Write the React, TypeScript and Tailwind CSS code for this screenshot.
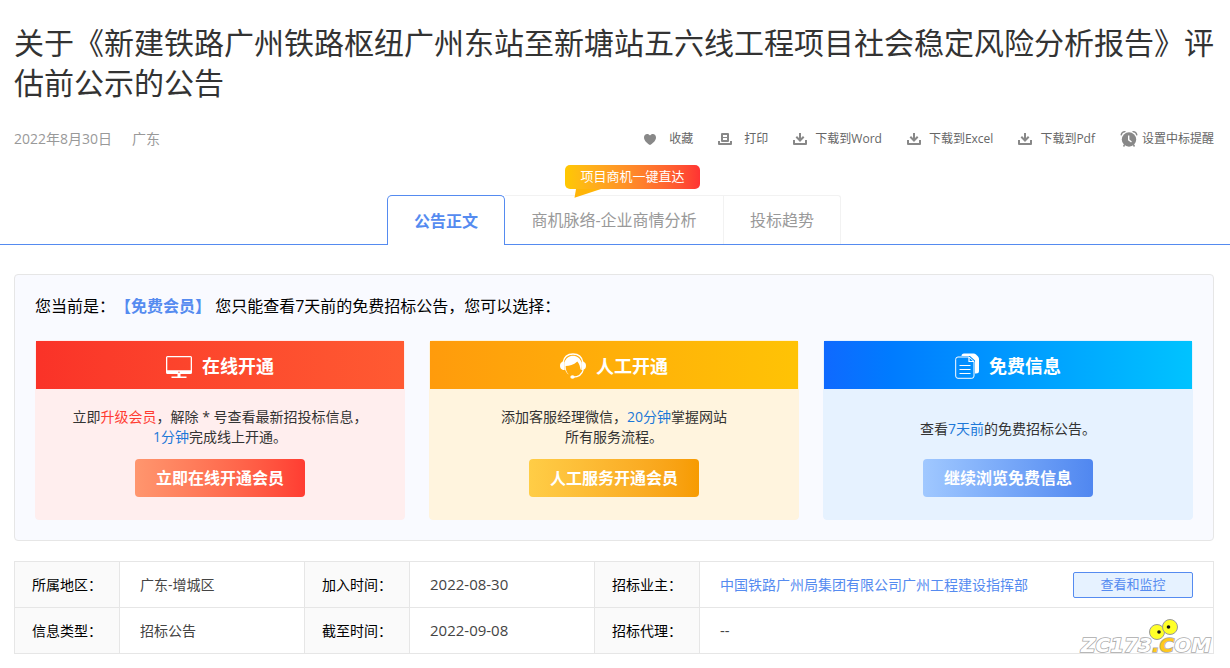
import type { ReactNode } from "react";
import clsx from "clsx";

interface ToolItem {
  label: string;
  icon: ReactNode;
  gap: string;
}

interface PlanCardProps {
  title: string;
  icon: ReactNode;
  action: string;
  cardClass: string;
  headClass: string;
  buttonClass: string;
  textClass?: string;
  children: ReactNode;
}

const tools: ToolItem[] = [
  { label: "收藏", icon: <HeartIcon />, gap: "gap-3" },
  { label: "打印", icon: <PrintIcon />, gap: "gap-3" },
  { label: "下载到Word", icon: <DownloadIcon />, gap: "gap-2" },
  { label: "下载到Excel", icon: <DownloadIcon />, gap: "gap-2" },
  { label: "下载到Pdf", icon: <DownloadIcon />, gap: "gap-2" },
  { label: "设置中标提醒", icon: <AlarmIcon />, gap: "gap-1" },
];

export default function App() {
  return (
    <main className="bg-white pt-[23px] pb-3 font-['Open_Sans','Noto_Sans_CJK_SC',sans-serif] text-sm text-[#333] [text-spacing-trim:space-all]">
      <header className="pr-4 pl-3.5">
        <h1 className="text-[30px] leading-10">
          关于《新建铁路广州铁路枢纽广州东站至新塘站五六线工程项目社会稳定风险分析报告》评估前公示的公告
        </h1>
        <div className="mt-6 flex flex-wrap items-center justify-between">
          <p className="flex gap-5 leading-6 text-[#999]">
            <span>2022年8月30日</span>
            <span>广东</span>
          </p>
          <div className="flex gap-[25px]">
            {tools.map((tool) => (
              <button key={tool.label} type="button" className={clsx("flex items-center text-xs leading-6 text-[#666]", tool.gap)}>
                {tool.icon}
                {tool.label}
              </button>
            ))}
          </div>
        </div>
      </header>

      <nav className="mt-11 flex justify-center border-b border-[#558bf0] pr-0.5 text-base text-[#999]">
        <a href="#content" className="-mb-px flex h-[50px] w-[118px] items-center justify-center rounded-t-[5px] border border-b-0 border-[#558bf0] bg-white font-bold text-[#558bf0]">
          公告正文
        </a>
        <a href="#analysis" className="relative flex w-[219px] items-center justify-center border-t border-r border-[#f2f2f2]">
          商机脉络-企业商情分析
          <span className="absolute -top-[31px] left-[60px] flex h-6 w-[135px] items-center justify-center rounded-[5px] bg-linear-to-r from-[#ffc800] to-[#ff3333] text-[13px] text-white">
            项目商机一键直达
            <svg className="absolute top-6 left-[9px]" width="27" height="9" viewBox="0 0 27 9" aria-hidden="true">
              <path d="M2 0H27L0.500 8.800Z" fill="#ffb508" />
            </svg>
          </span>
        </a>
        <a href="#trend" className="flex w-[117px] items-center justify-center rounded-tr-[3px] border-t border-r border-[#f2f2f2]">
          投标趋势
        </a>
      </nav>

      <div className="pr-4 pl-3.5">
        <section className="mt-[29px] rounded border border-[#e6e6e6] bg-[#f9faff] p-5">
          <p className="text-base leading-[22px] text-black">
            您当前是：<strong className="text-[#558bf0]">【免费会员】</strong> 您只能查看7天前的免费招标公告，您可以选择：
          </p>
          <div className="mt-[23px] grid grid-cols-3 gap-6">
            <PlanCard
              title="在线开通"
              icon={<MonitorIcon />}
              action="立即在线开通会员"
              cardClass="border-[#ffeeee] bg-[#ffeeee]"
              headClass="from-[#fa3228] to-[#ff5a32]"
              buttonClass="from-[#ff966e] to-[#ff3c32]"
            >
              立即<span className="text-[#ff3c32]">升级会员</span>，解除 * 号查看最新招投标信息，
              <br />
              <span className="text-[#1c78d8]">1分钟</span>完成线上开通。
            </PlanCard>
            <PlanCard
              title="人工开通"
              icon={<HeadsetIcon />}
              action="人工服务开通会员"
              cardClass="border-[#fff4de] bg-[#fff4de]"
              headClass="from-[#ff9b0c] to-[#ffc305]"
              buttonClass="from-[#ffcd46] to-[#f79b00]"
            >
              添加客服经理微信，<span className="text-[#1c78d8]">20分钟</span>掌握网站
              <br />
              所有服务流程。
            </PlanCard>
            <PlanCard
              title="免费信息"
              icon={<PagesIcon />}
              action="继续浏览免费信息"
              cardClass="border-[#e6f2ff] bg-[#e6f2ff]"
              headClass="from-[#0f69ff] to-[#00c3ff]"
              buttonClass="from-[#a0c8ff] to-[#5087f0]"
              textClass="pt-3"
            >
              查看<span className="text-[#1c78d8]">7天前</span>的免费招标公告。
            </PlanCard>
          </div>
        </section>

        <div className="relative mt-5">
          <table className="w-full table-fixed border-collapse">
            <colgroup>
              <col className="w-[105px]" />
              <col className="w-[185px]" />
              <col className="w-[105px]" />
              <col className="w-[185px]" />
              <col className="w-[105px]" />
              <col />
            </colgroup>
            <tbody>
              <tr>
                <LabelCell>所属地区：</LabelCell>
                <ValueCell>广东-增城区</ValueCell>
                <LabelCell>加入时间：</LabelCell>
                <ValueCell className="text-[15px]">2022-08-30</ValueCell>
                <LabelCell>招标业主：</LabelCell>
                <ValueCell>
                  <div className="flex items-center justify-between">
                    <a href="#owner" className="text-[#558bf0]">中国铁路广州局集团有限公司广州工程建设指挥部</a>
                    <button type="button" className="h-[26px] w-[120px] rounded-xs border border-[#558bf0] bg-[#e6f2ff] text-[13px] text-[#558bf0]">
                      查看和监控
                    </button>
                  </div>
                </ValueCell>
              </tr>
              <tr>
                <LabelCell>信息类型：</LabelCell>
                <ValueCell>招标公告</ValueCell>
                <LabelCell>截至时间：</LabelCell>
                <ValueCell className="text-[15px]">2022-09-08</ValueCell>
                <LabelCell>招标代理：</LabelCell>
                <ValueCell className="text-[15px]">--</ValueCell>
              </tr>
            </tbody>
          </table>
          <Watermark />
        </div>
      </div>
    </main>
  );
}

function PlanCard({ title, icon, action, cardClass, headClass, buttonClass, textClass, children }: PlanCardProps) {
  return (
    <article className={clsx("rounded border pb-[22px] text-center", cardClass)}>
      <h2 className={clsx("flex h-12 items-center justify-center gap-2.5 bg-linear-to-r pt-0.5 text-lg font-bold text-white", headClass)}>
        {icon}
        {title}
      </h2>
      <p className={clsx("mt-[18px] h-10 leading-5", textClass)}>{children}</p>
      <button type="button" className={clsx("mt-3 h-[38px] w-[170px] rounded bg-linear-to-r text-base font-bold text-white", buttonClass)}>
        {action}
      </button>
    </article>
  );
}

function LabelCell({ children }: { children: ReactNode }) {
  return (
    <th scope="row" className="h-[46px] border border-[#e6e6e6] bg-[#fafafa] text-center font-normal text-black">
      {children}
    </th>
  );
}

function ValueCell({ children, className }: { children: ReactNode; className?: string }) {
  return <td className={clsx("h-[46px] border border-[#e6e6e6] px-5 text-[#444]", className)}>{children}</td>;
}

function HeartIcon() {
  return (
    <svg width="14" height="14" viewBox="0 0 14 14" fill="#888" aria-hidden="true">
      <path d="M7 13C4.500 11.200 1 8.800 1 5.400C1 3.300 2.400 2 4.100 2C5.400 2 6.400 2.600 7 3.600C7.600 2.600 8.600 2 9.900 2C11.600 2 13 3.300 13 5.400C13 8.800 9.500 11.200 7 13Z" />
    </svg>
  );
}

function PrintIcon() {
  return (
    <svg width="14" height="14" viewBox="0 0 14 14" fill="none" stroke="#888" aria-hidden="true">
      <path d="M4 2H10V9H4Z" strokeWidth="2" strokeLinejoin="round" />
      <path d="M5 5.500H9" />
      <path d="M1 9V12H13V9" strokeWidth="2" strokeLinejoin="round" />
    </svg>
  );
}

function DownloadIcon() {
  return (
    <svg width="14" height="14" viewBox="0 0 14 14" fill="none" stroke="#888" strokeWidth="2" aria-hidden="true">
      <path d="M7 1V8M3.300 4.800L7 8.500L10.700 4.800" />
      <path d="M1 8V12H13V8" strokeLinejoin="round" />
    </svg>
  );
}

function AlarmIcon() {
  return (
    <svg width="18" height="18" viewBox="0 0 18 18" fill="none" stroke="#888" aria-hidden="true">
      <circle cx="9" cy="9.500" r="7.200" fill="#888" stroke="none" />
      <path d="M1.200 4.800C1.500 3 3 1.700 5 1.600M16.800 4.800C16.500 3 15 1.700 13 1.600" strokeWidth="1.400" strokeLinecap="round" />
      <path d="M4.500 15L3.500 16.500M13.500 15L14.500 16.500" strokeWidth="1.500" />
      <path d="M8.700 5.500V9.800L11.500 12" stroke="#fff" strokeWidth="1.400" />
    </svg>
  );
}

function MonitorIcon() {
  return (
    <svg width="26" height="26" viewBox="0 0 26 26" fill="#fff" aria-hidden="true">
      <path fillRule="evenodd" d="M1.500 3H24.500Q26 3 26 4.500V19.500Q26 21 24.500 21H1.500Q0 21 0 19.500V4.500Q0 3 1.500 3ZM1.300 4.300V17.300H24.700V4.300Z" />
      <circle cx="13" cy="19.200" r="0.700" fill="#ff462d" />
      <path d="M11.500 21H14.500V23.500H20.500V25H5.500V23.500H11.500Z" />
    </svg>
  );
}

function HeadsetIcon() {
  return (
    <svg width="26" height="26" viewBox="0 0 26 26" fill="none" stroke="#fff" aria-hidden="true">
      <path d="M3 9.500C4 4 8 1 13 1C18 1 22 4 23 9.500" strokeWidth="1.300" />
      <path d="M4.500 9.500C6 5 9 2.800 13 2.800C17 2.800 20 5 21.500 9.500C22 12 21.800 14 20.500 17C20.200 13.500 19.300 10.500 17.300 8.500C13.500 12 9.500 12.800 5.700 13C5.600 16.500 6.500 19.500 8.800 21.500C5.500 19.500 4 15 4.500 9.500Z" fill="#fff" stroke="none" />
      <path d="M4.500 8.500H3Q0 9.500 0 12.800Q0 16 3 17H4.700ZM21.500 8.500H23Q26 9.500 26 12.800Q26 16 23 17H21.300Z" fill="#fff" stroke="none" />
      <path d="M23.300 16.500C22.300 20.800 19 24 13 24.200" strokeWidth="1.200" />
      <ellipse cx="12.500" cy="24" rx="2.200" ry="1.700" fill="#fff" stroke="none" />
    </svg>
  );
}

function PagesIcon() {
  return (
    <svg width="24" height="26" viewBox="0 0 24 26" fill="none" stroke="#fff" aria-hidden="true">
      <path d="M6.500 3Q6.500 0.500 9 0.500H18.500Q20 0.500 21 1.500L23 3.500Q24 4.500 24 6V18Q24 20.500 21 20.500H20V7.500L15 3Z" fill="#fff" stroke="none" />
      <path d="M3 4H14L19 8.500V23Q19 25.300 16.800 25.300H3Q0.700 25.300 0.700 23V6.300Q0.700 4 3 4Z" strokeWidth="1" />
      <path d="M14 4V8.500H19" strokeWidth="1.200" />
      <path d="M4.500 12.500H15.500M4.500 16.500H15.500M4.500 20.500H15.500" strokeWidth="1.200" />
    </svg>
  );
}

function Watermark() {
  return (
    <svg className="pointer-events-none absolute right-0 -bottom-1" width="136" height="42" viewBox="0 0 136 42" aria-hidden="true">
      <text x="3" y="36" fontFamily="DejaVu Sans" fontSize="20" fontWeight="700" fontStyle="italic" fill="#fff" stroke="#aaa" strokeWidth="1.600" paintOrder="stroke">
        ZC173<tspan fill="#ffc81e">.C</tspan>OM
      </text>
      <g stroke="#999">
        <circle cx="79" cy="16" r="7.500" fill="#ffff28" />
        <circle cx="92" cy="11" r="7.500" fill="#ffff28" />
      </g>
      <circle cx="81" cy="16" r="1.800" fill="#111" />
      <circle cx="90.500" cy="11" r="1.800" fill="#111" />
    </svg>
  );
}
